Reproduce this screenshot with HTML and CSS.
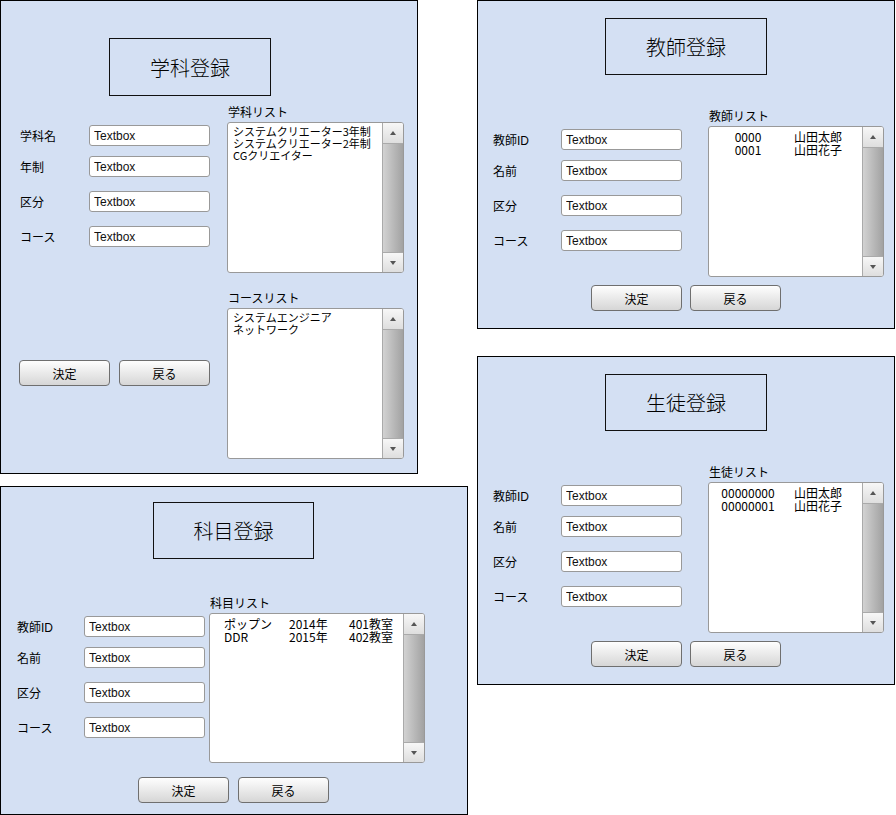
FILE: index.html
```html
<!DOCTYPE html>
<html lang="ja">
<head>
  <meta charset="UTF-8" />
  <meta name="viewport" content="width=device-width, initial-scale=1.0" />
  <title>登録画面</title>
  <link rel="stylesheet" href="styles.css">
</head>
<body>
  <div class="desk">

    <!-- 学科登録 -->
    <section class="window w-dept">
      <div class="title-box">学科登録</div>
      <div class="body">
        <div class="form">
          <div class="row"><span class="label">学科名</span><input class="tb" type="text" value="Textbox" /></div>
          <div class="row"><span class="label">年制</span><input class="tb" type="text" value="Textbox" /></div>
          <div class="row"><span class="label">区分</span><input class="tb" type="text" value="Textbox" /></div>
          <div class="row"><span class="label">コース</span><input class="tb" type="text" value="Textbox" /></div>
          <div class="buttons">
            <button class="btn">決定</button>
            <button class="btn">戻る</button>
          </div>
        </div>
        <div class="lists">
          <div class="list-label">学科リスト</div>
          <div class="listbox">
            <div class="items small">
              <div>システムクリエーター3年制</div>
              <div>システムクリエーター2年制</div>
              <div>CGクリエイター</div>
            </div>
            <div class="scrollbar"><span class="arrow up"></span><span class="track"></span><span class="arrow down"></span></div>
          </div>
          <div class="list-label second">コースリスト</div>
          <div class="listbox">
            <div class="items small">
              <div>システムエンジニア</div>
              <div>ネットワーク</div>
            </div>
            <div class="scrollbar"><span class="arrow up"></span><span class="track"></span><span class="arrow down"></span></div>
          </div>
        </div>
      </div>
    </section>

    <!-- 教師登録 -->
    <section class="window w-person w-teacher">
      <div class="title-box">教師登録</div>
      <div class="body">
        <div class="form">
          <div class="row"><span class="label">教師ID</span><input class="tb" type="text" value="Textbox" /></div>
          <div class="row"><span class="label">名前</span><input class="tb" type="text" value="Textbox" /></div>
          <div class="row"><span class="label">区分</span><input class="tb" type="text" value="Textbox" /></div>
          <div class="row"><span class="label">コース</span><input class="tb" type="text" value="Textbox" /></div>
        </div>
        <div class="lists">
          <div class="list-label">教師リスト</div>
          <div class="listbox">
            <div class="items people">
              <span class="id">0000</span><span>山田太郎</span>
              <span class="id">0001</span><span>山田花子</span>
            </div>
            <div class="scrollbar"><span class="arrow up"></span><span class="track"></span><span class="arrow down"></span></div>
          </div>
        </div>
      </div>
      <div class="buttons">
        <button class="btn">決定</button>
        <button class="btn">戻る</button>
      </div>
    </section>

    <!-- 生徒登録 -->
    <section class="window w-person w-student">
      <div class="title-box">生徒登録</div>
      <div class="body">
        <div class="form">
          <div class="row"><span class="label">教師ID</span><input class="tb" type="text" value="Textbox" /></div>
          <div class="row"><span class="label">名前</span><input class="tb" type="text" value="Textbox" /></div>
          <div class="row"><span class="label">区分</span><input class="tb" type="text" value="Textbox" /></div>
          <div class="row"><span class="label">コース</span><input class="tb" type="text" value="Textbox" /></div>
        </div>
        <div class="lists">
          <div class="list-label">生徒リスト</div>
          <div class="listbox">
            <div class="items people">
              <span class="id">00000000</span><span>山田太郎</span>
              <span class="id">00000001</span><span>山田花子</span>
            </div>
            <div class="scrollbar"><span class="arrow up"></span><span class="track"></span><span class="arrow down"></span></div>
          </div>
        </div>
      </div>
      <div class="buttons">
        <button class="btn">決定</button>
        <button class="btn">戻る</button>
      </div>
    </section>

    <!-- 科目登録 -->
    <section class="window w-subject">
      <div class="title-box">科目登録</div>
      <div class="body">
        <div class="form">
          <div class="row"><span class="label">教師ID</span><input class="tb" type="text" value="Textbox" /></div>
          <div class="row"><span class="label">名前</span><input class="tb" type="text" value="Textbox" /></div>
          <div class="row"><span class="label">区分</span><input class="tb" type="text" value="Textbox" /></div>
          <div class="row"><span class="label">コース</span><input class="tb" type="text" value="Textbox" /></div>
        </div>
        <div class="lists">
          <div class="list-label">科目リスト</div>
          <div class="listbox">
            <div class="items subjects">
              <span>ポップン</span><span>2014年</span><span>401教室</span>
              <span>DDR</span><span>2015年</span><span>402教室</span>
            </div>
            <div class="scrollbar"><span class="arrow up"></span><span class="track"></span><span class="arrow down"></span></div>
          </div>
        </div>
      </div>
      <div class="buttons">
        <button class="btn">決定</button>
        <button class="btn">戻る</button>
      </div>
    </section>

  </div>
</body>
</html>
```

FILE: styles.css
```css
body {
  margin: 0;
  font-family: "Liberation Sans", "Noto Sans CJK JP", sans-serif;
  font-size: 12px;
  color: #000;
  background: #fff;
}
.desk {
  position: relative;
  width: 896px;
  height: 815px;
}

/* windows sit on a free canvas */
.window {
  position: absolute;
  box-sizing: border-box;
  border: 1px solid #000;
  background: #d4e0f3;
}
.w-dept { left: 0; top: 0; width: 418px; height: 474px; }
.w-teacher { left: 477px; top: 0; width: 418px; height: 329px; }
.w-student { left: 477px; top: 356px; width: 418px; height: 329px; }
.w-subject { left: 0; top: 486px; width: 468px; height: 329px; }

.title-box {
  box-sizing: border-box;
  display: flex;
  align-items: center;
  justify-content: center;
  width: 162px;
  height: 57px;
  border: 1px solid #111;
  font-family: "Noto Sans CJK JP", sans-serif;
  font-size: 20px;
  font-weight: 300;
}
.w-dept .title-box { margin: 37px 0 0 108px; height: 58px; }
.w-person .title-box { margin: 17px 0 0 127px; }
.w-subject .title-box { margin: 15px 0 0 152px; width: 161px; }

.body {
  display: flex;
  align-items: flex-start;
}
.w-dept .body { margin-top: 8px; }
.w-person .body { margin-top: 33px; }
.w-subject .body { margin-top: 36px; }

/* form column */
.form {
  display: flex;
  flex-direction: column;
  margin-top: 21px;
}
.w-dept .form { margin-left: 19px; }
.w-person .form { margin-left: 15px; }
.w-subject .form { margin-left: 16px; }

.row {
  display: flex;
  align-items: center;
  height: 21px;
}
.row + .row { margin-top: 10px; }
.row:nth-child(3), .row:nth-child(4) { margin-top: 14px; }
.label {
  width: 69px;
  font-family: "Liberation Sans", "Noto Sans CJK JP", sans-serif;
  font-size: 12px;
}
.w-person .label { width: 68px; }
.w-subject .label { width: 67px; }

.tb {
  box-sizing: border-box;
  width: 121px;
  height: 21px;
  margin: 0;
  padding: 0 4px;
  border: 1px solid #999;
  border-radius: 3px;
  background: #fff;
  font-family: "Liberation Sans", sans-serif;
  font-size: 12px;
  color: #111;
}

/* lists */
.lists {
  display: flex;
  flex-direction: column;
}
.w-dept .lists { margin-left: 17px; }
.w-person .lists { margin-left: 26px; }
.w-subject .lists { margin-left: 4px; }

.list-label {
  height: 16px;
  line-height: 16px;
  margin: 0 0 2px 1px;
  font-family: "Noto Sans CJK JP", sans-serif;
  font-size: 12px;
}
.list-label.second { margin-top: 17px; }

.listbox {
  box-sizing: border-box;
  display: flex;
  width: 177px;
  height: 151px;
  border: 1px solid #999;
  border-radius: 3px;
  background: #fff;
  overflow: hidden;
}
.w-person .listbox { width: 176px; }
.w-subject .listbox { width: 216px; height: 150px; }

.items {
  flex: 1;
  font-family: "Noto Sans CJK JP", sans-serif;
  font-size: 12px;
  line-height: 13px;
  padding: 3px 0 0 5px;
}
.items.small {
  font-size: 11px;
  line-height: 12px;
  padding-top: 2px;
}
.items.people {
  display: grid;
  grid-template-columns: 68px auto;
  grid-auto-rows: 13px;
  column-gap: 12px;
  align-content: start;
}
.items.people .id { text-align: center; }
.items.subjects {
  display: grid;
  grid-template-columns: 65px 60px auto;
  grid-auto-rows: 13px;
  align-content: start;
  padding-left: 14px;
}

.scrollbar {
  display: flex;
  flex-direction: column;
  width: 20px;
  border-left: 1px solid #aaa;
}
.arrow {
  position: relative;
  height: 20px;
  background: linear-gradient(#f7f7f7, #dedede);
}
.arrow.up { border-bottom: 1px solid #aaa; }
.arrow.down { border-top: 1px solid #aaa; height: 19px; }
.arrow::after {
  content: "";
  position: absolute;
  left: 7px;
  top: 8px;
  border-left: 3px solid transparent;
  border-right: 3px solid transparent;
}
.arrow.up::after { border-bottom: 4px solid #555; }
.arrow.down::after { border-top: 4px solid #555; }
.track {
  flex: 1;
  background: linear-gradient(to right, #d2d2d2, #a2a2a2);
}

/* buttons */
.buttons {
  display: flex;
  gap: 8px;
}
.w-dept .buttons { margin: 113px 0 0 -1px; gap: 9px; }
.w-person .buttons { margin: 8px 0 0 113px; }
.w-subject .buttons { margin: 14px 0 0 137px; gap: 9px; }

.btn {
  box-sizing: border-box;
  width: 91px;
  height: 26px;
  margin: 0;
  padding: 0;
  border: 1px solid #6f6f6f;
  border-radius: 4px;
  background: linear-gradient(#fefefe, #d6d6d6);
  font-family: "Noto Sans CJK JP", sans-serif;
  font-size: 12px;
  color: #000;
}
```
